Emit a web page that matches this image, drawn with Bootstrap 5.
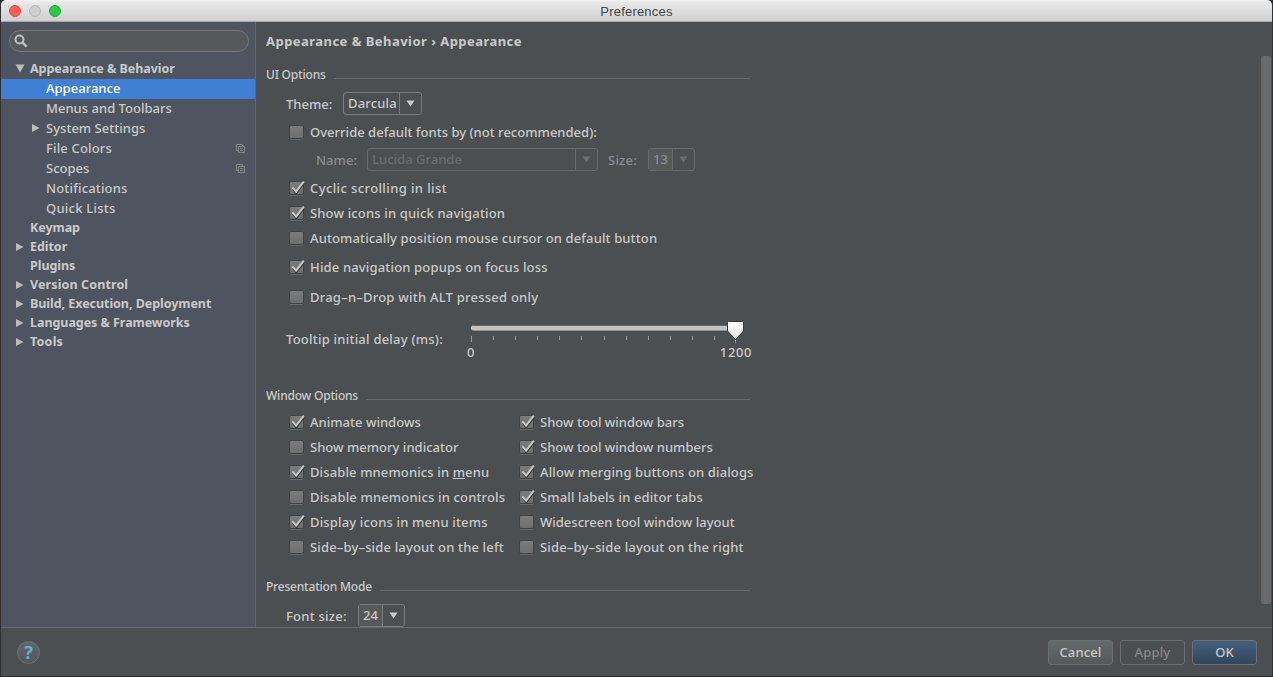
<!DOCTYPE html>
<html lang="en">
<head>
<meta charset="utf-8">
<title>Preferences</title>
<link href="https://cdn.jsdelivr.net/npm/bootstrap@5.3.0/dist/css/bootstrap.min.css" rel="stylesheet">
<script src="https://cdn.jsdelivr.net/npm/bootstrap@5.3.0/dist/js/bootstrap.bundle.min.js"></script>
<style>
body{background:#2b2b2b;color:#cacaca;font:500 13px/20px "Noto Sans",sans-serif;letter-spacing:.16px;white-space:nowrap;overflow:hidden}
.window{width:1273px;height:677px;border:1px solid #2f3031;border-top:0;background:#4b4f51;border-radius:5px 5px 0 0}
.titlebar{height:22px;background:linear-gradient(#f4f4f4,#e9e9e9 2px,#d0d0d0);border-bottom:1px solid #aaa;border-radius:5px 5px 0 0;color:#454545;font:13px/22px "Liberation Sans",sans-serif;letter-spacing:.2px;padding:0 8px}
.title-text{padding-right:52px;padding-top:2px}
.light{width:12px;height:12px;border-radius:50%;border:1px solid #e2483f;background:#ff5d57}
.light.off{background:#cfcfcf;border-color:#b6b6b6}
.light.zoom{background:#2fc843;border-color:#21a733}
.body-row{height:605px}
.sidebar{width:255px;background:#4e5560;border-right:1px solid #626668}
.search{height:22px;margin:8px 6px 8px 8px;border:1px solid #757779;border-radius:11px;background:#55595a;padding-left:4px}
.tree-row{height:20px;line-height:18px;padding-left:45px;position:relative}
.tree-root{height:19px;line-height:17px;padding-left:29px;font-weight:700;font-size:12.5px;letter-spacing:-.05px}
.tree-row svg{position:absolute;left:14px;top:4px}
.tree-row svg.nested{left:30px}
.tree-row svg.copy{left:235px;top:5px}
.tree-sel{background:#4080d4;color:#fff}
.pane{padding:9px 0 0 10px}
.crumb{font-weight:700;height:20px;letter-spacing:.46px}
.section{height:20px;width:484px;font-size:12px;letter-spacing:-.2px;line-height:21px}
.section::after{content:"";flex:1;height:1px;background:#646768;margin:8px 0 0 8px}
.indent{padding-left:20px}
.combo{height:23px;border:1px solid #797b7c;border-radius:3px;line-height:20px}
.combo .val{padding-left:4px}
.combo .val.filled{background:#55595a}
.combo .arrow{width:22px;border-left:1px solid #797b7c;padding-right:1px}
.muted{color:#8a8c8d}
.dim{border-color:#67696a;color:#6b6d6e}
.dim .arrow{border-color:#67696a}
.dim .num{color:#8b8d8e}
.opt{height:20px;padding-left:23px}
.box{width:15px;height:16px;margin-right:6px;flex:none;overflow:visible}
.mt5{margin-top:5px}.mt6{margin-top:6px}.mt7{margin-top:7px}.mt8{margin-top:8px}.mt9{margin-top:9px}.mt10{margin-top:10px}.mt13{margin-top:13px}
.wide{letter-spacing:.39px}.roomy{letter-spacing:.23px}.snug{letter-spacing:.12px}.tight{letter-spacing:.02px}
.theme-row{margin-top:8px}
.lbl-theme{width:57px;padding-top:1px}
.theme{width:79px}
.font-row{padding-left:50px}
.name-lbl{width:51px;padding-top:1px}
.name-combo{width:231px}
.size-lbl{width:40px;margin-left:10px;padding-top:1px}
.num-combo{width:47px}
.slider-row{margin-top:12px;height:46px}
.slider-lbl{width:172px;padding-top:10px}
.slider{margin-top:1px}
.scale{width:296px;padding:0 2px 0 9px;line-height:17px;letter-spacing:.6px}
.window-sec{margin-top:20px}
.pres-sec{margin-top:19px}
.col-left{width:230px}
.fs-lbl{width:72px;padding-top:1px}
.scroll{width:10px;height:548px;margin:34px 1px 0 0;background:linear-gradient(90deg,#636363,#6d6d6d 40%,#686868);border-radius:2px}
.footer-bar{height:49px;border-top:1px solid #656768;padding:0 15px 0 16px}
.help{width:23px;height:23px;border-radius:50%;border:1px solid #6d7273;background:linear-gradient(#606769,#53585a);color:#5fb0d6;font:700 18px/20px "Noto Sans",sans-serif;text-align:center;letter-spacing:0}
.btns{gap:7px}
.dlg-btn{width:65px;height:25px;border:1px solid #6b6e6f;border-radius:3px;font:500 13px/22px "Noto Sans",sans-serif;letter-spacing:.15px;padding:0;color:#cacaca}
.cancel{background:linear-gradient(#646b6c,#55595a)}
.apply{background:none;color:#868788}
.ok{background:linear-gradient(#455f7d,#33465a);border-color:#6a7077}
</style>
</head>
<body>
<svg width="0" height="0" class="position-absolute">
<defs>
<linearGradient id="g" x1="0" y1="0" x2="0" y2="1"><stop offset="0" stop-color="#7c7c7c"/><stop offset="1" stop-color="#6e6e6e"/></linearGradient>
<linearGradient id="k" x1="0" y1="0" x2="0" y2="1"><stop offset="0" stop-color="#fff"/><stop offset="1" stop-color="#e0e0e0"/></linearGradient>
<symbol id="off" viewBox="0 0 15 16"><path d="M1 15.5h13" stroke="#65696a"/><rect x=".5" y="1.500" width="14" height="13" rx="1.500" fill="url(#g)" stroke="#404344"/></symbol>
<symbol id="on" viewBox="0 0 15 16" overflow="visible"><use href="#off" width="15" height="16"/><path d="M4 9L7.300 13.200L15 3.200" fill="none" stroke="#333" stroke-width="2"/><path d="M3.400 7.400L7.100 11.700L14.800 1.600" fill="none" stroke="#c8c8c8" stroke-width="2"/></symbol>
<symbol id="closed" viewBox="0 0 9 10"><path d="M1 1v8l7.500-4z" fill="#bcbcbc"/></symbol>
<symbol id="down" viewBox="0 0 9 7"><path d="M.5 .5h8L4.500 6.500z" fill="currentColor"/></symbol>
<symbol id="cp" viewBox="0 0 9 9"><path d="M3 6.500H.5V.5h6V3M2.500 2.500h6v6h-6zM4 4.500h3M4 6.500h3" fill="none" stroke="#84888d"/></symbol>
</defs>
</svg>
<div class="window d-flex flex-column">
 <div class="titlebar d-flex align-items-center flex-shrink-0">
  <div class="d-flex gap-2"><span class="light"></span><span class="light off"></span><span class="light zoom"></span></div>
  <div class="flex-fill text-center title-text">Preferences</div>
 </div>
 <div class="body-row d-flex flex-shrink-0">
  <nav class="sidebar flex-shrink-0">
   <div class="search d-flex align-items-center"><svg width="14" height="14" viewBox="0 0 14 14" fill="none" stroke="#c0c0c0" stroke-width="2"><circle cx="5.500" cy="5.500" r="4"/><path d="M8.300 8.300L12.700 12.700" stroke-width="2.400"/></svg></div>
   <div class="tree-row tree-root"><svg width="10" height="9" viewBox="0 0 10 9"><path d="M.5 .5h9L5 8.500z" fill="#bcbcbc"/></svg>Appearance &amp; Behavior</div>
   <div class="tree-row tree-sel tight">Appearance</div>
   <div class="tree-row tight">Menus and Toolbars</div>
   <div class="tree-row tight"><svg class="nested" width="9" height="10"><use href="#closed"/></svg>System Settings</div>
   <div class="tree-row">File Colors<svg class="copy" width="9" height="9"><use href="#cp"/></svg></div>
   <div class="tree-row tight">Scopes<svg class="copy" width="9" height="9"><use href="#cp"/></svg></div>
   <div class="tree-row">Notifications</div>
   <div class="tree-row roomy">Quick Lists</div>
   <div class="tree-row tree-root">Keymap</div>
   <div class="tree-row tree-root"><svg width="9" height="10"><use href="#closed"/></svg>Editor</div>
   <div class="tree-row tree-root">Plugins</div>
   <div class="tree-row tree-root snug"><svg width="9" height="10"><use href="#closed"/></svg>Version Control</div>
   <div class="tree-row tree-root"><svg width="9" height="10"><use href="#closed"/></svg>Build, Execution, Deployment</div>
   <div class="tree-row tree-root"><svg width="9" height="10"><use href="#closed"/></svg>Languages &amp; Frameworks</div>
   <div class="tree-row tree-root roomy"><svg width="9" height="10"><use href="#closed"/></svg>Tools</div>
  </nav>
  <main class="pane flex-fill">
   <div class="crumb">Appearance &amp; Behavior › Appearance</div>
   <div class="section d-flex align-items-center mt13">UI Options</div>
   <div class="indent d-flex align-items-center theme-row">
    <label class="lbl-theme tight">Theme:</label><div class="combo d-flex theme"><span class="val flex-fill">Darcula</span><span class="arrow d-flex align-items-center justify-content-center"><svg width="9" height="7"><use href="#down"/></svg></span></div>
   </div>
   <label class="opt d-flex align-items-center mt7 tight"><svg class="box"><use href="#off"/></svg>Override default fonts by (not recommended):</label>
   <div class="d-flex align-items-center font-row mt6">
    <span class="muted name-lbl tight">Name:</span><div class="combo dim d-flex name-combo"><span class="val flex-fill tight">Lucida Grande</span><span class="arrow d-flex align-items-center justify-content-center"><svg width="9" height="7"><use href="#down"/></svg></span></div>
    <span class="muted size-lbl roomy">Size:</span><div class="combo dim d-flex num-combo"><span class="val filled num flex-fill">13</span><span class="arrow d-flex align-items-center justify-content-center"><svg width="9" height="7"><use href="#down"/></svg></span></div>
   </div>
   <label class="opt d-flex align-items-center mt7 wide"><svg class="box"><use href="#on"/></svg>Cyclic scrolling in list</label>
   <label class="opt d-flex align-items-center mt5"><svg class="box"><use href="#on"/></svg>Show icons in quick navigation</label>
   <label class="opt d-flex align-items-center mt5 snug"><svg class="box"><use href="#off"/></svg>Automatically position mouse cursor on default button</label>
   <label class="opt d-flex align-items-center mt9"><svg class="box"><use href="#on"/></svg>Hide navigation popups on focus loss</label>
   <label class="opt d-flex align-items-center mt10 roomy"><svg class="box"><use href="#off"/></svg>Drag–n–Drop with ALT pressed only</label>
   <div class="slider-row indent d-flex">
    <span class="slider-lbl roomy">Tooltip initial delay (ms):</span>
    <div class="slider">
     <svg width="290" height="24" class="d-block">
      <rect x="13" y="5" width="265" height="6" rx="3" fill="#8f8f8f"/><rect x="13" y="6" width="265" height="4" rx="2" fill="#c4c4c4"/><path d="M15 5.500H277" stroke="#666"/>
      <path d="M13.500 16v6M277.500 18v5" stroke="#9a9c9d"/>
      <path d="M35.500 16v4M57.500 16v4M79.500 16v4M101.500 16v4M123.500 16v4M146.500 16v4M168.500 16v4M190.500 16v4M212.500 16v4M234.500 16v4M256.500 16v4" stroke="#9a9c9d"/>
      <path d="M270.500 1.500h14q1 0 1 1v8.500l-8 8.500l-8 -8.500v-8.500q0 -1 1 -1z" fill="url(#k)" stroke="#343637"/>
     </svg>
     <div class="d-flex justify-content-between scale"><span>0</span><span>1200</span></div>
    </div>
   </div>
   <div class="section d-flex align-items-center window-sec">Window Options</div>
   <div class="d-flex mt7">
    <div class="col-left d-flex flex-column">
     <label class="opt d-flex align-items-center tight"><svg class="box"><use href="#on"/></svg>Animate windows</label>
     <label class="opt d-flex align-items-center mt5 tight"><svg class="box"><use href="#off"/></svg>Show memory indicator</label>
     <label class="opt d-flex align-items-center mt5 snug"><svg class="box"><use href="#on"/></svg><span>Disable mnemonics in <u>m</u>enu</span></label>
     <label class="opt d-flex align-items-center mt5"><svg class="box"><use href="#off"/></svg>Disable mnemonics in controls</label>
     <label class="opt d-flex align-items-center mt5"><svg class="box"><use href="#on"/></svg>Display icons in menu items</label>
     <label class="opt d-flex align-items-center mt5"><svg class="box"><use href="#off"/></svg>Side–by–side layout on the left</label>
    </div>
    <div class="d-flex flex-column">
     <label class="opt d-flex align-items-center tight"><svg class="box"><use href="#on"/></svg>Show tool window bars</label>
     <label class="opt d-flex align-items-center mt5 tight"><svg class="box"><use href="#on"/></svg>Show tool window numbers</label>
     <label class="opt d-flex align-items-center mt5 snug"><svg class="box"><use href="#on"/></svg>Allow merging buttons on dialogs</label>
     <label class="opt d-flex align-items-center mt5 snug"><svg class="box"><use href="#on"/></svg>Small labels in editor tabs</label>
     <label class="opt d-flex align-items-center mt5 tight"><svg class="box"><use href="#off"/></svg>Widescreen tool window layout</label>
     <label class="opt d-flex align-items-center mt5"><svg class="box"><use href="#off"/></svg>Side–by–side layout on the right</label>
    </div>
   </div>
   <div class="section d-flex align-items-center pres-sec">Presentation Mode</div>
   <div class="indent d-flex align-items-center mt8">
    <span class="fs-lbl roomy">Font size:</span><div class="combo d-flex num-combo"><span class="val filled flex-fill">24</span><span class="arrow d-flex align-items-center justify-content-center"><svg width="9" height="7"><use href="#down"/></svg></span></div>
   </div>
  </main>
  <div class="scroll flex-shrink-0"></div>
 </div>
 <footer class="footer-bar d-flex align-items-center flex-shrink-0">
  <div class="help">?</div>
  <div class="d-flex ms-auto btns"><button class="dlg-btn cancel">Cancel</button><button class="dlg-btn apply">Apply</button><button class="dlg-btn ok">OK</button></div>
 </footer>
</div>
</body>
</html>
